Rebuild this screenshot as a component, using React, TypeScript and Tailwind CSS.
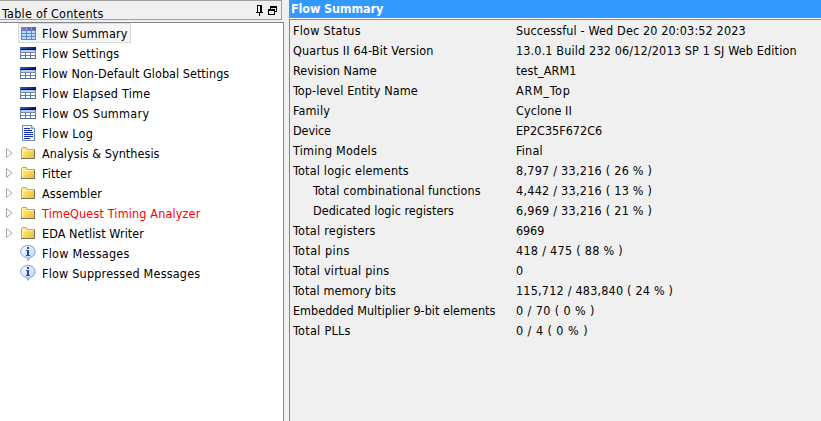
import React from "react";

type IconKind = "summary" | "table" | "log" | "folder" | "info";

const items: { label: string; icon: IconKind; red?: boolean; spacing: string }[] = [
  { label: "Flow Summary", icon: "summary", spacing: "tracking-[0.17px]" },
  { label: "Flow Settings", icon: "table", spacing: "tracking-[0.15px]" },
  { label: "Flow Non-Default Global Settings", icon: "table", spacing: "tracking-[0.04px]" },
  { label: "Flow Elapsed Time", icon: "table", spacing: "tracking-[0.23px]" },
  { label: "Flow OS Summary", icon: "table", spacing: "tracking-[0.28px]" },
  { label: "Flow Log", icon: "log", spacing: "tracking-[0.22px]" },
  { label: "Analysis & Synthesis", icon: "folder", spacing: "tracking-[0.05px]" },
  { label: "Fitter", icon: "folder", spacing: "tracking-[0.15px]" },
  { label: "Assembler", icon: "folder", spacing: "tracking-[0.1px]" },
  { label: "TimeQuest Timing Analyzer", icon: "folder", red: true, spacing: "tracking-[0.15px]" },
  { label: "EDA Netlist Writer", icon: "folder", spacing: "tracking-[0.06px]" },
  { label: "Flow Messages", icon: "info", spacing: "tracking-[0.25px]" },
  { label: "Flow Suppressed Messages", icon: "info", spacing: "tracking-[0.2px]" },
];

const rows: { label: string; value: string; indent?: boolean; ls: string; vs: string }[] = [
  { label: "Flow Status", value: "Successful - Wed Dec 20 20:03:52 2023", ls: "tracking-[0.25px]", vs: "tracking-[0.14px]" },
  { label: "Quartus II 64-Bit Version", value: "13.0.1 Build 232 06/12/2013 SP 1 SJ Web Edition", ls: "tracking-[0.16px]", vs: "tracking-[0.15px]" },
  { label: "Revision Name", value: "test_ARM1", ls: "tracking-normal", vs: "tracking-[0.1px]" },
  { label: "Top-level Entity Name", value: "ARM_Top", ls: "tracking-[0.1px]", vs: "tracking-[0.7px]" },
  { label: "Family", value: "Cyclone II", ls: "tracking-[0.15px]", vs: "tracking-[0.1px]" },
  { label: "Device", value: "EP2C35F672C6", ls: "tracking-[-0.1px]", vs: "tracking-normal" },
  { label: "Timing Models", value: "Final", ls: "tracking-[0.22px]", vs: "tracking-[0.2px]" },
  { label: "Total logic elements", value: "8,797 / 33,216 ( 26 % )", ls: "tracking-[0.2px]", vs: "tracking-[0.25px]" },
  { label: "Total combinational functions", value: "4,442 / 33,216 ( 13 % )", indent: true, ls: "tracking-[0.1px]", vs: "tracking-[0.25px]" },
  { label: "Dedicated logic registers", value: "6,969 / 33,216 ( 21 % )", indent: true, ls: "tracking-[0.03px]", vs: "tracking-[0.25px]" },
  { label: "Total registers", value: "6969", ls: "tracking-[0.26px]", vs: "tracking-[-0.1px]" },
  { label: "Total pins", value: "418 / 475 ( 88 % )", ls: "tracking-[0.38px]", vs: "tracking-[0.28px]" },
  { label: "Total virtual pins", value: "0", ls: "tracking-[0.22px]", vs: "tracking-normal" },
  { label: "Total memory bits", value: "115,712 / 483,840 ( 24 % )", ls: "tracking-[0.13px]", vs: "tracking-[0.2px]" },
  { label: "Embedded Multiplier 9-bit elements", value: "0 / 70 ( 0 % )", ls: "tracking-[0.02px]", vs: "tracking-[0.4px]" },
  { label: "Total PLLs", value: "0 / 4 ( 0 % )", ls: "tracking-[0.3px]", vs: "tracking-[0.45px]" },
];

function Gradients() {
  return (
    <svg className="absolute h-0 w-0" aria-hidden="true">
      <defs>
        <linearGradient id="navy"><stop stopColor="#2b5fd6" /><stop offset="1" stopColor="#061a66" /></linearGradient>
        <linearGradient id="steel" x2="0" y2="1"><stop stopColor="#8fa4c8" /><stop offset="1" stopColor="#52698f" /></linearGradient>
        <linearGradient id="gold" x2="1" y2="1"><stop stopColor="#fff3a0" /><stop offset="1" stopColor="#f6b91c" /></linearGradient>
        <linearGradient id="bubble" x2="1" y2="1"><stop stopColor="#ffffff" /><stop offset="1" stopColor="#b3cff5" /></linearGradient>
        <linearGradient id="violet"><stop stopColor="#8d7cc9" /><stop offset="1" stopColor="#6550b0" /></linearGradient>
      </defs>
    </svg>
  );
}

function ItemIcon({ kind }: { kind: IconKind }) {
  return (
    <svg className="block h-4 w-4 shrink-0" viewBox="0 0 16 16">
      {kind === "summary" && (
        <g>
          <path fill="#6286c8" d="M1 2h15v13H1z" />
          <path fill="url(#violet)" d="M1 2h15v3H1z" />
          <path fill="#b6dcff" d="M2 6h4v2H2zM7 6h4v2H7zM12 6h3v2h-3zM2 9h4v2H2zM7 9h4v2H7zM12 9h3v2h-3zM2 12h4v2H2zM7 12h4v2H7zM12 12h3v2h-3z" />
          <path fill="#a292d5" d="M6 2h1v3H6zM11 2h1v3h-1z" />
        </g>
      )}
      {kind === "table" && (
        <g>
          <path fill="url(#steel)" d="M0 2h16v12H0z" />
          <path fill="url(#navy)" d="M0 2h16v3H0z" />
          <path fill="#020817" d="M1 4h14v1H1z" />
          <path fill="#b9cde8" d="M0 5h16v2H0z" />
          <path fill="#7085a8" d="M0 5h1v2H0zM15 5h1v2h-1z" />
          <path fill="#fff" d="M1 8h4v2H1zM6 8h4v2H6zM11 8h4v2h-4zM1 11h4v2H1zM6 11h4v2H6zM11 11h4v2h-4z" />
        </g>
      )}
      {kind === "log" && (
        <g>
          <path fill="#edf5ff" stroke="#6d88af" d="M2.5.5h9l3 3v12h-12z" />
          <path fill="#c6d8ed" stroke="#7f95b5" d="M11.5.5v3h3" />
          <path stroke="#142b9e" d="M4 3.5h6M4 5.5h8M4 7.5h9M4 9.5h9M4 11.5h9M4 13.5h6" />
        </g>
      )}
      {kind === "folder" && (
        <g>
          <path fill="url(#gold)" stroke="#c9a44a" d="M1.5 3.5l1-1h4l1 2h7v9h-13z" />
          <path stroke="#fff2a0" fill="none" d="M2.5 12V5.5h11" />
          <path stroke="#59636a" strokeOpacity="0.75" fill="none" d="M1 13.5h13.5V5" />
        </g>
      )}
      {kind === "info" && (
        <g>
          <path fill="url(#bubble)" stroke="#829cc8" d="M8 .5c4 0 7.2 2.6 7.2 6 0 3-2 5.2-5 5.9L8 15.4l-.8-3C3.4 12.2.7 9.7.7 6.5.7 3.1 4 .5 8 .5z" />
          <path fill="#2547b5" d="M7 2h2v2H7zM6 5h3v5h1v1H6v-1h1V6H6z" />
        </g>
      )}
    </svg>
  );
}

export default function App() {
  return (
    <div className="flex h-[421px] w-[821px] overflow-hidden bg-[#f0f0f0] font-['DejaVu_Sans_Condensed','DejaVu_Sans',sans-serif] text-[12.5px] leading-5 text-black">
      <Gradients />
      <aside className="flex w-[284px] shrink-0 flex-col">
        <header className="flex h-5 w-[282px] shrink-0 items-center border-y border-r border-[#a0a0a0] pl-0.5 pr-1">
          <h2 className="grow whitespace-nowrap pt-[7px] tracking-[0.24px]">Table of Contents</h2>
          <svg className="h-3 w-[21px] shrink-0" viewBox="0 0 21 12" shapeRendering="crispEdges">
            <path d="M1 1h5v7h1v1H4v3H3V9H0V8h1z" fill="#000" />
            <path d="M2 2h2v6H2z" fill="#f0f0f0" />
            <path d="M14 2h7v6h-2v3h-7V5h2z" fill="#000" />
            <path d="M15 4h5v3h-1V5h-4zM13 7h5v3h-5z" fill="#f0f0f0" />
          </svg>
        </header>
        <div className="h-0.5 shrink-0" />
        <nav className="grow border-r border-t border-[#828790] bg-white">
          {items.map((item, i) => (
            <div key={item.label} className="flex h-5 items-center">
              <div className="flex w-[18px] shrink-0 justify-center">
                {item.icon === "folder" && (
                  <svg className="h-3 w-2" viewBox="0 0 8 12">
                    <path d="M1.5 1.5v9L7 6z" fill="#fff" stroke="#a6a6a6" />
                  </svg>
                )}
              </div>
              <div className={i === 0 ? "flex h-5 w-[113px] items-center border border-[#dcdcdc] bg-[#f5f5f5] pl-px" : "flex h-5 items-center pl-0.5"}>
                <ItemIcon kind={item.icon} />
                <span className={`ml-1.5 whitespace-nowrap pt-0.5 ${item.spacing} ${item.red ? "text-[#ff0000]" : ""}`}>{item.label}</span>
              </div>
            </div>
          ))}
        </nav>
      </aside>
      <main className="ml-[5px] flex grow flex-col">
        <h1 className="h-[18px] shrink-0 bg-[#3399ff] pl-0.5 font-bold leading-[17px] tracking-[-0.12px] text-white">Flow Summary</h1>
        <div className="h-px shrink-0 bg-white" />
        <div className="grow border-l border-t border-[#828790] pt-px">
          {rows.map((row) => (
            <div key={row.label} className="flex h-5 pl-[3px]">
              <span className={`w-[223px] shrink-0 whitespace-nowrap ${row.ls} ${row.indent ? "pl-5" : ""}`}>{row.label}</span>
              <span className={`whitespace-nowrap ${row.vs}`}>{row.value}</span>
            </div>
          ))}
        </div>
      </main>
    </div>
  );
}
